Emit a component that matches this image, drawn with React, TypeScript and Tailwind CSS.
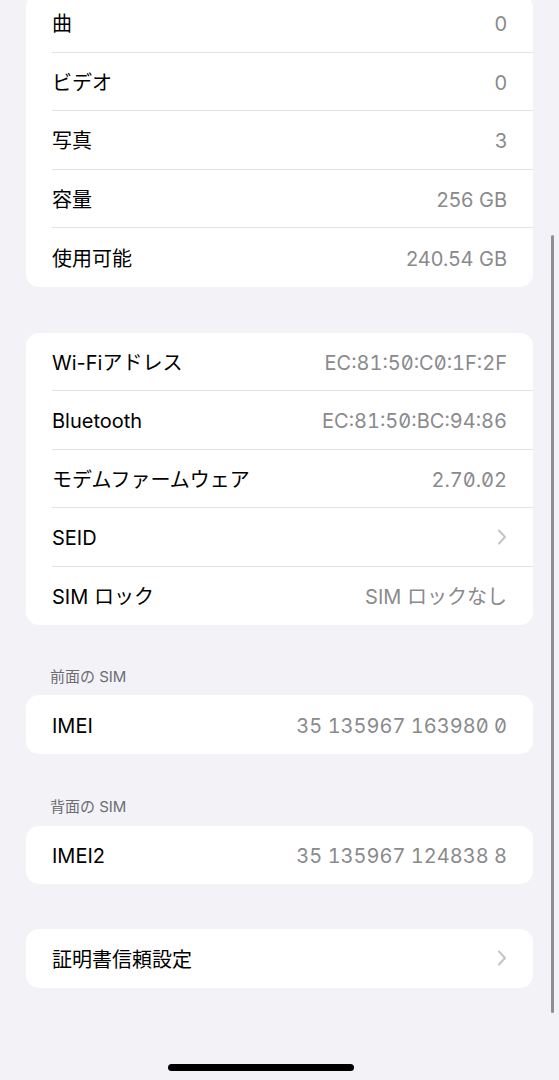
import type { ReactNode } from 'react'

type Row = { label: string; value?: string; chevron?: boolean; mono?: boolean }

const font = "font-['Inter','Noto_Sans_CJK_JP',sans-serif]"

function Chevron() {
  return (
    <svg width="10" height="16" viewBox="0 0 10 16" className="text-[#c4c4c7]">
      <polyline
        points="2,1.5 8,8 2,14.5"
        fill="none"
        stroke="currentColor"
        strokeWidth="2"
        strokeLinecap="round"
        strokeLinejoin="round"
      />
    </svg>
  )
}

function Card({ rows, className = '' }: { rows: Row[]; className?: string }) {
  return (
    <div className={`mx-[26px] rounded-[13px] bg-white ${className}`}>
      {rows.map((r, i) => (
        <div key={r.label} className="flex h-[58.5px] pl-[26px]">
          <div
            className={`flex flex-1 items-center justify-between pr-[26px] ${
              i < rows.length - 1 ? 'border-b border-[#e3e3e6]' : ''
            }`}
          >
            <span className="pt-[3px] text-[20px] leading-none text-black">{r.label}</span>
            {r.chevron ? (
              <Chevron />
            ) : (
              <span
                className={`pt-[3px] text-[20px] leading-none text-[#8a8a8e] ${
                  r.mono ? "[font-feature-settings:'tnum','zero']" : ''
                }`}
              >
                {r.value}
              </span>
            )}
          </div>
        </div>
      ))}
    </div>
  )
}

function Header({ children, className = '' }: { children: ReactNode; className?: string }) {
  return (
    <div className={`px-[50px] text-[15px] leading-[20px] text-[#6d6d72] ${className}`}>
      {children}
    </div>
  )
}

export default function App() {
  return (
    <div className={`relative h-[1080px] overflow-hidden bg-[#f2f2f7] ${font}`}>
      <Card
        className="mt-[-6px]"
        rows={[
          { label: '曲', value: '0' },
          { label: 'ビデオ', value: '0' },
          { label: '写真', value: '3' },
          { label: '容量', value: '256 GB' },
          { label: '使用可能', value: '240.54 GB' },
        ]}
      />
      <Card
        className="mt-[46px]"
        rows={[
          { label: 'Wi-Fiアドレス', value: 'EC:81:50:C0:1F:2F', mono: true },
          { label: 'Bluetooth', value: 'EC:81:50:BC:94:86', mono: true },
          { label: 'モデムファームウェア', value: '2.70.02', mono: true },
          { label: 'SEID', chevron: true },
          { label: 'SIM ロック', value: 'SIM ロックなし' },
        ]}
      />
      <Header className="mt-[42px] mb-[8px]">前面の SIM</Header>
      <Card rows={[{ label: 'IMEI', value: '35 135967 163980 0', mono: true }]} />
      <Header className="mt-[43px] mb-[9px]">背面の SIM</Header>
      <Card rows={[{ label: 'IMEI2', value: '35 135967 124838 8', mono: true }]} />
      <Card className="mt-[45px]" rows={[{ label: '証明書信頼設定', chevron: true }]} />

      {/* scroll indicator */}
      <div className="absolute left-[551px] top-[235px] h-[778px] w-[3px] rounded-full bg-[#8e8e93]" />
      {/* home indicator */}
      <div className="absolute bottom-[9px] left-[168px] h-[7px] w-[186px] rounded-full bg-black" />
    </div>
  )
}
